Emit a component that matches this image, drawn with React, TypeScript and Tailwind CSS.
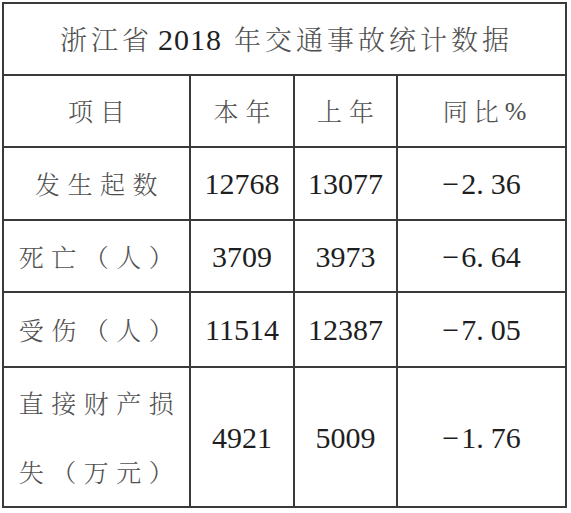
import React from 'react';

interface Row {
    label: string[];
    current: string;
    previous: string;
    change: string;
    tall?: boolean;
}

const rows: Row[] = [
    { label: ['发生起数'], current: '12768', previous: '13077', change: '-2.36' },
    { label: ['死亡（人）'], current: '3709', previous: '3973', change: '-6.64' },
    { label: ['受伤（人）'], current: '11514', previous: '12387', change: '-7.05' },
    { label: ['直接财产损', '失（万元）'], current: '4921', previous: '5009', change: '-1.76', tall: true }
];

const cjk = "font-['Noto_Serif_CJK_SC','Noto_Sans_CJK_SC',sans-serif] font-light text-[#505050]";
const num = "font-['Liberation_Serif','Noto_Sans_CJK_SC',serif] font-normal text-[#1e1e1e] text-[30px]";
const cell = 'flex items-center justify-center border-r-2 border-b-2 border-[#3a3a3a]';

// "-2.36" is drawn with a long minus and a wide gap after the point
const Change: React.FC<{ value: string }> = ({ value }) => {
    const [whole, frac] = value.replace('-', '').split('.');
    return (
        <span className={num}>
            <span className="inline-block w-[17px] mr-[2px] text-center">−</span>
            {whole}
            <span className="mr-[7px]">.</span>
            {frac}
        </span>
    );
};

export default function App() {
    return (
        <div className="w-[571px] h-[513px] bg-white pt-[2px] pl-[2px]">
            <div className="grid w-[565px] grid-cols-[187px_104px_103px_169px] border-l-2 border-t-2 border-[#3a3a3a]">

                {/* Title */}
                <div className={`${cell} col-span-4 h-[72px] ${cjk} text-[27px] tracking-[4px] pl-[4px]`}>
                    浙江省<span className={`${num} text-[29px] tracking-[1px] ml-[5px] mr-[12px]`}>2018</span>年交通事故统计数据
                </div>

                {/* Header */}
                <div className={`${cell} h-[72px] ${cjk} text-[25px] tracking-[7px] pl-[7px]`}>项目</div>
                <div className={`${cell} h-[72px] ${cjk} text-[25px] tracking-[7px] pl-[7px]`}>本年</div>
                <div className={`${cell} h-[72px] ${cjk} text-[25px] tracking-[7px] pl-[7px]`}>上年</div>
                <div className={`${cell} h-[72px] ${cjk} text-[25px] tracking-[6px] pl-[6px]`}>
                    同比<span className="font-['Liberation_Serif',serif] text-[26px] tracking-normal">%</span>
                </div>

                {rows.map((row, i) => {
                    const h = row.tall ? 'h-[140px]' : i === 0 ? 'h-[73px]' : i === 2 ? 'h-[75px]' : 'h-[72px]';
                    return (
                        <React.Fragment key={i}>
                            <div className={`${cell} ${h} flex-col ${cjk} text-[25px] tracking-[7.5px] pl-[7px] leading-[69px]`}>
                                {row.label.map((line, j) => (
                                    <span key={j} className="block">{line}</span>
                                ))}
                            </div>
                            <div className={`${cell} ${h}`}><span className={num}>{row.current}</span></div>
                            <div className={`${cell} ${h}`}><span className={num}>{row.previous}</span></div>
                            <div className={`${cell} ${h}`}><Change value={row.change} /></div>
                        </React.Fragment>
                    );
                })}
            </div>
        </div>
    );
}
